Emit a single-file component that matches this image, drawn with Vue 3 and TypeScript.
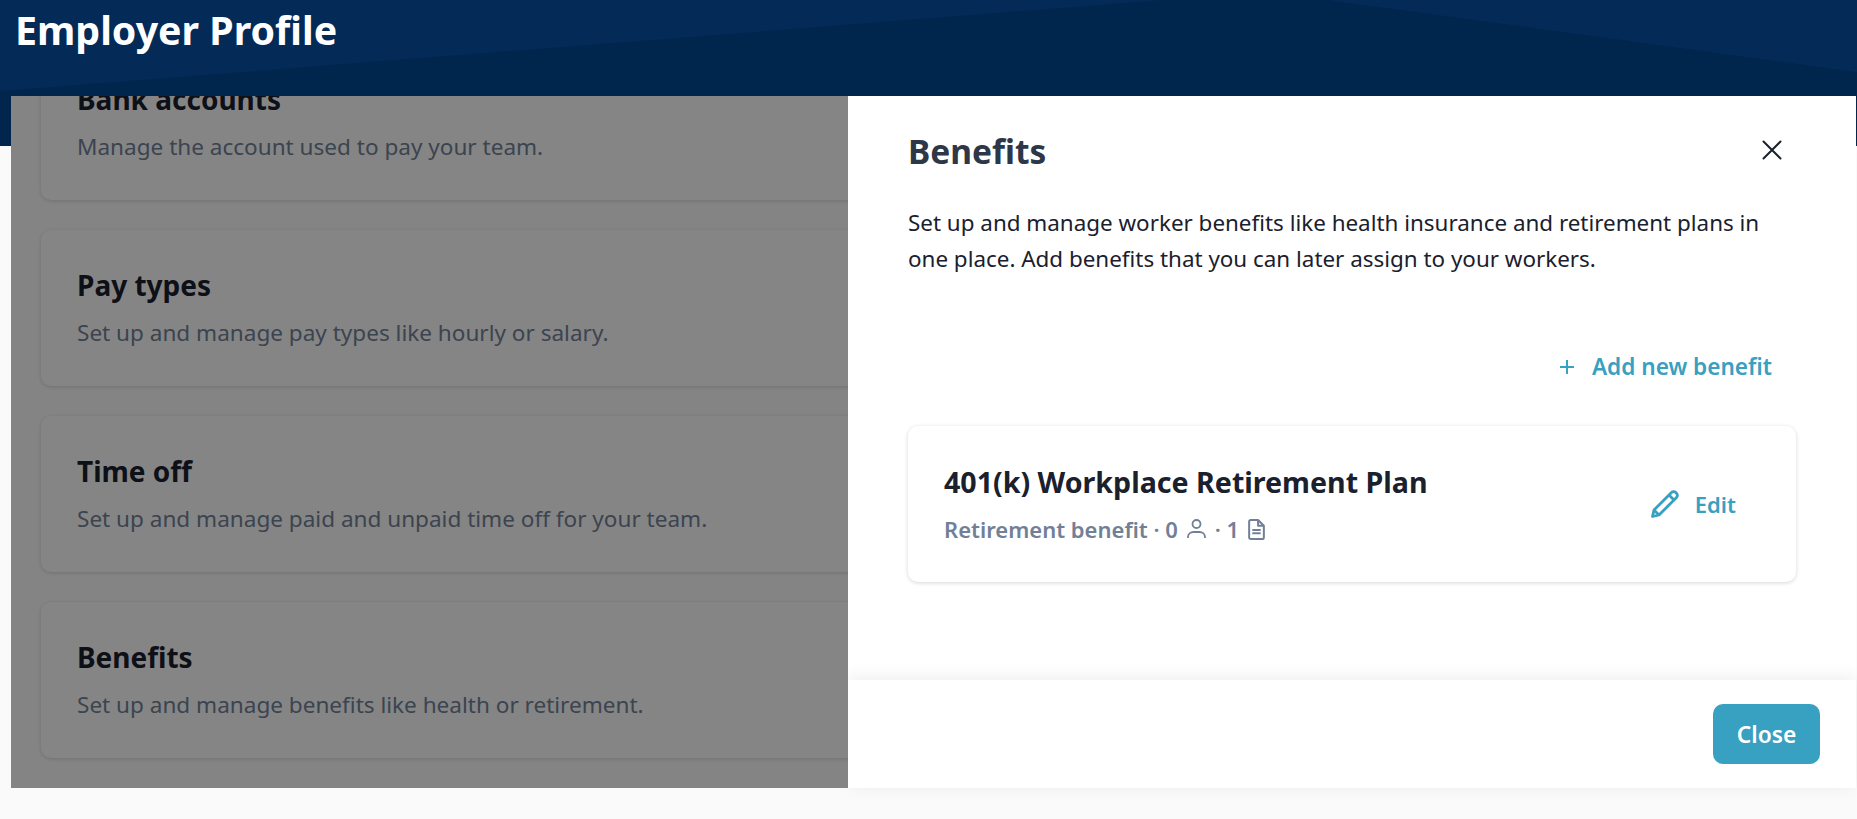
<script setup lang="ts">
interface Section { title: string; text: string }
const sections: Section[] = [
  { title: 'Bank accounts', text: 'Manage the account used to pay your team.' },
  { title: 'Pay types', text: 'Set up and manage pay types like hourly or salary.' },
  { title: 'Time off', text: 'Set up and manage paid and unpaid time off for your team.' },
  { title: 'Benefits', text: 'Set up and manage benefits like health or retirement.' },
]
</script>

<template>
  <div class="page">
    <header class="hero">
      <svg class="hero-art" viewBox="0 0 1857 146" preserveAspectRatio="none" aria-hidden="true">
        <polygon points="0,0 1162,0 0,91" fill="#042a58" />
        <polygon points="1327,0 1857,0 1857,72" fill="#042a58" />
      </svg>
      <h1 class="hero-title">Employer Profile</h1>
    </header>

    <div class="stage">
      <div class="behind">
        <div class="list">
          <section v-for="s in sections" :key="s.title" class="section-card">
            <h2>{{ s.title }}</h2>
            <p>{{ s.text }}</p>
          </section>
        </div>
        <div class="scrim"></div>
      </div>

      <aside class="drawer">
        <div class="drawer-body">
          <div class="drawer-head">
            <h2>Benefits</h2>
            <button class="icon-btn" aria-label="Close">
              <svg width="20" height="20" viewBox="0 0 20 20" fill="none" stroke="#1a202c" stroke-width="2" stroke-linecap="round">
                <path d="M1.500 1.500 18.500 18.500M18.500 1.500 1.500 18.500" />
              </svg>
            </button>
          </div>
          <p class="intro">Set up and manage worker benefits like health insurance and retirement plans in one place. Add benefits that you can later assign to your workers.</p>
          <div class="add-row">
            <button class="link add">
              <svg width="16" height="16" viewBox="0 0 16 16" fill="none" stroke="currentColor" stroke-width="2">
                <path d="M8 1v14M1 8h14" />
              </svg>
              <span>Add new benefit</span>
            </button>
          </div>
          <div class="benefit">
            <div class="benefit-main">
              <h3>401(k) Workplace Retirement Plan</h3>
              <div class="meta">
                <span>Retirement benefit · 0</span>
                <svg class="ic-person" width="19" height="20" viewBox="0 0 19 20" fill="none" stroke="currentColor" stroke-width="1.8">
                  <circle cx="9.500" cy="5" r="4" />
                  <path d="M1 19v-1c0-3 2.500-5 5.500-5h6c3 0 5.500 2 5.500 5v1" />
                </svg>
                <span>· 1</span>
                <svg class="ic-doc" width="17" height="21" viewBox="0 0 16 20" fill="none" stroke="currentColor" stroke-width="1.9" stroke-linejoin="round">
                  <path d="M2.500 1h7L15 6.500V17.500a1.500 1.500 0 0 1-1.500 1.500h-11A1.500 1.500 0 0 1 1 17.500v-15A1.500 1.500 0 0 1 2.500 1Z" />
                  <path d="M9.500 1v5.500H15M4 10.500h8M4 13.500h8" />
                </svg>
              </div>
            </div>
            <button class="link edit">
              <svg width="30" height="30" viewBox="0 0 30 30" fill="none" stroke="currentColor" stroke-width="2.800" stroke-linejoin="round">
                <path d="M2.500 27.500 4 21 21.500 3.500a3 3 0 0 1 4.300 0l.7.7a3 3 0 0 1 0 4.300L9 26Z" />
                <path d="M19 6l5.500 5.500M4 21l5 5" />
              </svg>
              <span>Edit</span>
            </button>
          </div>
        </div>
        <footer class="drawer-foot">
          <button class="close">Close</button>
        </footer>
      </aside>
    </div>
  </div>
</template>

<style>
html, body { margin: 0; background: #fafafa; }
</style>

<style scoped>
.page {
  position: relative;
  width: 1857px;
  height: 819px;
  overflow: hidden;
  background: #fafafa;
  font-family: "Noto Sans", "Open Sans", sans-serif;
}
.hero {
  position: relative;
  height: 146px;
  background: #00264d;
}
.hero-art {
  position: absolute;
  inset: 0;
  width: 100%;
  height: 100%;
}
.hero-title {
  position: relative;
  margin: 0;
  padding: 5px 0 0 15px;
  color: #fff;
  font-size: 39.300px;
  line-height: 50px;
  font-weight: 700;
}
.stage {
  position: absolute;
  top: 96px;
  left: 11px;
  right: 1px;
  height: 692px;
  display: flex;
}
.behind {
  position: relative;
  width: 837px;
  overflow: hidden;
  background: #fafafa;
}
.list {
  width: 1200px;
  margin: -52px 0 0 30px;
  display: flex;
  flex-direction: column;
  gap: 30px;
}
.section-card {
  height: 156px;
  box-sizing: border-box;
  padding: 36px 36px 0;
  background: #fcfcfc;
  border-radius: 10px;
  box-shadow: 0 1px 4px rgba(0, 0, 0, 0.16);
}
.section-card h2 {
  margin: 0;
  font-size: 28px;
  line-height: 38px;
  font-weight: 700;
  color: #1a202c;
}
.section-card p {
  margin: 14px 0 0;
  font-size: 22.550px;
  line-height: 30px;
  color: #718096;
}
.scrim {
  position: absolute;
  inset: 0;
  background: rgba(0, 0, 0, 0.47);
}
.drawer {
  width: 1008px;
  display: flex;
  flex-direction: column;
  background: #fff;
}
.drawer-body {
  height: 584px;
  box-sizing: border-box;
  padding: 0 60px;
  flex: none;
}
.drawer-head {
  display: flex;
  justify-content: space-between;
  align-items: center;
  padding-top: 35px;
  height: 40px;
}
.drawer-head h2 {
  margin: 0;
  font-size: 33.500px;
  line-height: 40px;
  font-weight: 700;
  color: #2d3748;
}
.icon-btn {
  border: 0;
  padding: 0;
  background: none;
  margin: -2px 14px 0 0;
  display: flex;
}
.intro {
  margin: 34px 0 0;
  font-size: 22.420px;
  line-height: 36px;
  color: #1a202c;
}
.add-row {
  display: flex;
  justify-content: flex-end;
  margin-top: 75px;
}
.link {
  border: 0;
  background: none;
  padding: 0;
  display: flex;
  align-items: center;
  font-family: inherit;
  color: #38a0c0;
  font-weight: 600;
}
.add {
  gap: 17px;
  font-size: 22.600px;
  line-height: 30px;
  margin-right: 24px;
}
.benefit {
  margin-top: 44px;
  height: 156px;
  box-sizing: border-box;
  padding: 0 60px 0 36px;
  background: #fff;
  border-radius: 10px;
  box-shadow: 0 1px 4px rgba(0, 0, 0, 0.16);
  display: flex;
  align-items: center;
  justify-content: space-between;
}
.benefit-main h3 {
  margin: 0;
  font-size: 28.600px;
  line-height: 38px;
  font-weight: 700;
  color: #1a202c;
}
.meta {
  display: flex;
  align-items: center;
  gap: 9px;
  margin-top: 12px;
  font-size: 22px;
  line-height: 32px;
  font-weight: 600;
  color: #718096;
}
.edit {
  gap: 15px;
  font-size: 22px;
  line-height: 30px;
}
.drawer-foot {
  flex: 1;
  display: flex;
  justify-content: flex-end;
  align-items: center;
  padding: 0 36px 0 0;
  background: #fff;
  box-shadow: 0 -3px 16px rgba(0, 0, 0, 0.07);
}
.close {
  width: 107px;
  height: 60px;
  border: 0;
  border-radius: 10px;
  background: #38a0c0;
  color: #fff;
  font-family: inherit;
  font-size: 22.800px;
  font-weight: 600;
}
</style>
